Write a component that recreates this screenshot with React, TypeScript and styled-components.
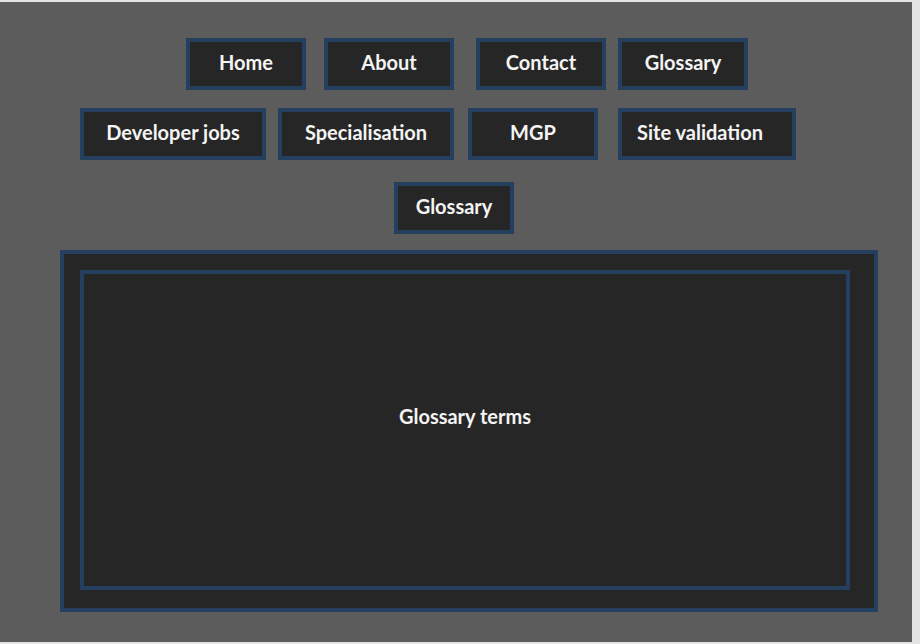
import React from 'react';
import styled, { createGlobalStyle } from 'styled-components';

const GlobalStyle = createGlobalStyle`
  html, body {
    margin: 0;
    padding: 0;
    background: #e4e4e4;
  }
  body {
    font-family: Lato, 'Open Sans', 'Liberation Sans', sans-serif;
  }
`;

const Page = styled.div`
  width: 912px;
  height: 640px;
  margin-top: 2px;
  padding-top: 36px;
  box-sizing: border-box;
  background-color: #5c5c5c;
  display: flex;
  flex-direction: column;
`;

const NavRow = styled.nav<{ $top: number; $left: number }>`
  display: flex;
  margin-top: ${(p) => p.$top}px;
  padding-left: ${(p) => p.$left}px;
`;

const NavButton = styled.a<{ $w: number; $ml?: number; $pr?: number }>`
  display: flex;
  align-items: center;
  justify-content: center;
  box-sizing: border-box;
  width: ${(p) => p.$w}px;
  height: 52px;
  margin-left: ${(p) => p.$ml ?? 0}px;
  padding: 0 ${(p) => p.$pr ?? 0}px 4px 0;
  border: 4px solid #253f5f;
  background-color: #262626;
  color: #f4f4f4;
  font-size: 20px;
  font-weight: 700;
  text-decoration: none;
  cursor: pointer;
`;

const Panel = styled.section`
  box-sizing: border-box;
  width: 818px;
  height: 362px;
  margin: 16px 0 0 60px;
  padding: 16px 0 0 16px;
  border: 4px solid #253f5f;
  background-color: #262626;
`;

const Content = styled.div`
  box-sizing: border-box;
  width: 770px;
  height: 320px;
  border: 4px solid #253f5f;
  display: flex;
  align-items: center;
  justify-content: center;
  padding-bottom: 28px;
  color: #f4f4f4;
  font-size: 20px;
  font-weight: 700;
`;

type Link = { label: string; w: number; ml?: number; pr?: number };

const rows: { top: number; left: number; links: Link[] }[] = [
  {
    top: 0,
    left: 186,
    links: [
      { label: 'Home', w: 120 },
      { label: 'About', w: 130, ml: 18 },
      { label: 'Contact', w: 130, ml: 22 },
      { label: 'Glossary', w: 130, ml: 12 },
    ],
  },
  {
    top: 18,
    left: 80,
    links: [
      { label: 'Developer jobs', w: 186 },
      { label: 'Specialisation', w: 176, ml: 12 },
      { label: 'MGP', w: 130, ml: 14 },
      { label: 'Site validation', w: 178, ml: 20, pr: 14 },
    ],
  },
  {
    top: 22,
    left: 394,
    links: [{ label: 'Glossary', w: 120 }],
  },
];

export default function App() {
  return (
    <>
      <GlobalStyle />
      <Page>
        {rows.map((row, i) => (
          <NavRow key={i} $top={row.top} $left={row.left}>
            {row.links.map((link) => (
              <NavButton key={link.label} $w={link.w} $ml={link.ml} $pr={link.pr}>
                {link.label}
              </NavButton>
            ))}
          </NavRow>
        ))}
        <Panel>
          <Content>Glossary terms</Content>
        </Panel>
      </Page>
    </>
  );
}
